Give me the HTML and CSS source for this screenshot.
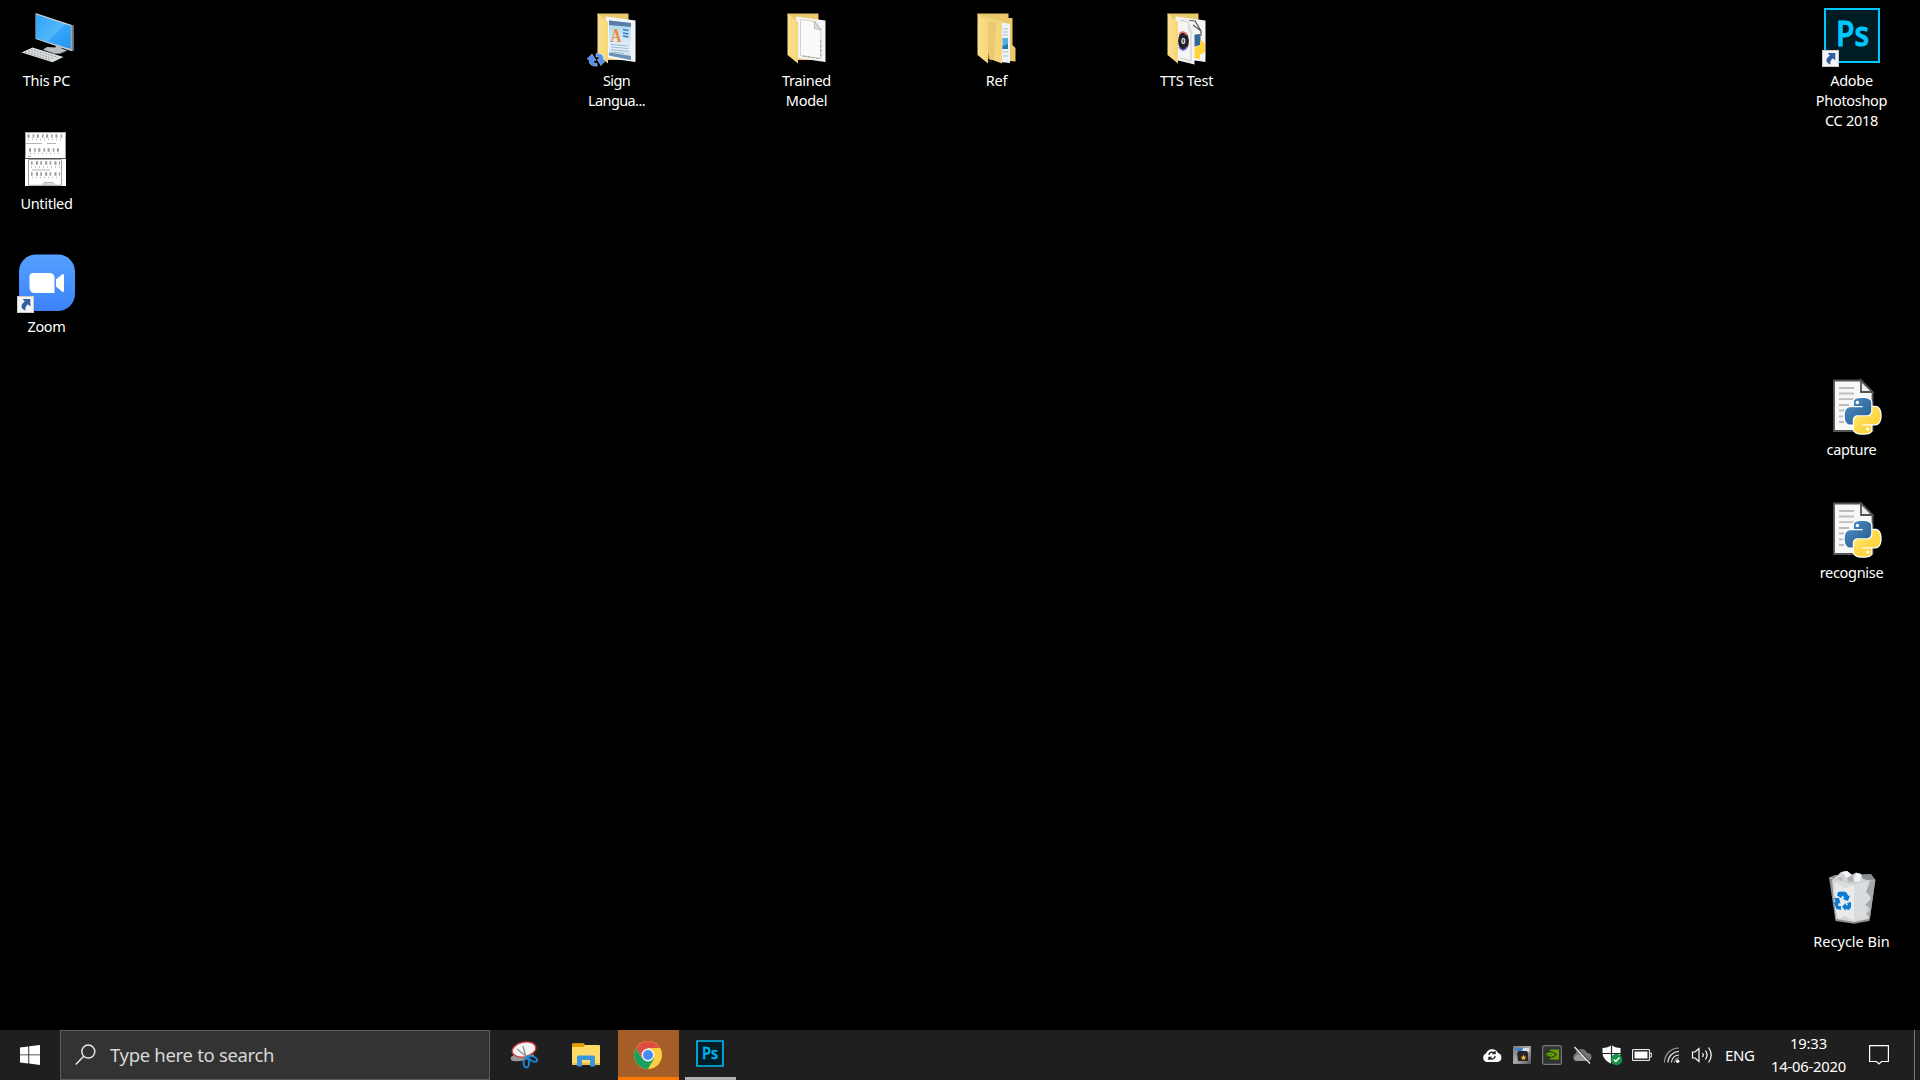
FILE: index.html
```html
<!DOCTYPE html>
<html lang="en">
<head>
<meta charset="utf-8">
<title>Desktop</title>
<link rel="stylesheet" href="styles.css">
</head>
<body>
<svg class="defs" width="0" height="0" aria-hidden="true">
  <defs>
    <linearGradient id="screen" x1="0" y1="0" x2="1" y2="1"><stop offset="0" stop-color="#2ea3f5"/><stop offset=".55" stop-color="#53b8fb"/><stop offset=".56" stop-color="#35a6f8"/><stop offset="1" stop-color="#2196f3"/></linearGradient>
    <linearGradient id="folder" x1="0" y1="0" x2="1" y2="0"><stop offset="0" stop-color="#fbdf8e"/><stop offset="1" stop-color="#f6d778"/></linearGradient>
    <linearGradient id="zoomblue" x1="0" y1="0" x2="0" y2="1"><stop offset="0" stop-color="#55a0ff"/><stop offset="1" stop-color="#3c82f8"/></linearGradient>
    <linearGradient id="pyblue" x1="0" y1="0" x2="1" y2="1"><stop offset="0" stop-color="#4b8fc6"/><stop offset="1" stop-color="#28588a"/></linearGradient>
    <linearGradient id="pyyellow" x1="1" y1="1" x2="0" y2="0"><stop offset="0" stop-color="#ffe873"/><stop offset="1" stop-color="#ffcb28"/></linearGradient>
    <linearGradient id="wordpad" x1="0" y1="0" x2="0" y2="1"><stop offset="0" stop-color="#a9d4ee"/><stop offset=".7" stop-color="#e4f1f9"/><stop offset="1" stop-color="#c8dced"/></linearGradient>
    <linearGradient id="steel" x1="0" y1="0" x2="1" y2="1"><stop offset="0" stop-color="#777"/><stop offset=".5" stop-color="#aaa"/><stop offset="1" stop-color="#555"/></linearGradient>
    <symbol id="shortcut" viewBox="0 0 17 17">
      <path d="M0 0H17V17H0Z" fill="#f5f5f5"/><path d="M.5 .5H16.500V16.500H.5Z" fill="none" stroke="#c9c9c9"/>
      <path d="M5.600 3H13.300V10.500L10.900 8.300C8.800 9.800 8 11.800 8.500 14.500C3.200 12.600 3.200 8.300 7.800 5.400Z" fill="#2f5fa0"/>
    </symbol>
    <path id="snake" d="M14.25.18l.9.2.73.26.59.3.45.32.34.34.25.34.16.33.1.3.04.26.02.2-.01.13V8.5l-.05.63-.13.55-.21.46-.26.38-.3.31-.33.25-.35.19-.35.14-.33.1-.3.07-.26.04-.21.02H8.77l-.69.05-.59.14-.5.22-.41.27-.33.32-.27.35-.2.36-.15.37-.1.35-.07.32-.04.27-.02.21v3.06H3.17l-.21-.03-.28-.07-.32-.12-.35-.18-.36-.26-.36-.36-.35-.46-.32-.59-.28-.73-.21-.88-.14-1.05-.05-1.23.06-1.22.16-1.04.24-.87.32-.71.36-.57.4-.44.42-.33.42-.24.4-.16.36-.1.32-.05.24-.01h.16l.06.01h8.16v-.83H6.18l-.01-2.75-.02-.37.05-.34.11-.31.17-.28.25-.26.31-.23.38-.2.44-.18.51-.15.58-.12.64-.1.71-.06.77-.04.84-.02 1.27.05z"/>
    <symbol id="pyfile" viewBox="0 0 92 68">
      <path d="M29 11.500H56L67.500 23V62H29Z" fill="#f7f7f7" stroke="#545454" stroke-width="1.800"/>
      <path d="M34 19H49M34 24.500H49M34 30.200H49M34 36H44M34 41.500H40M34 47.300H38M34 53H39" stroke="#bdbdbd" stroke-width="1.800"/>
      <path d="M56 11.500V23H67.500Z" fill="#ededed" stroke="#545454" stroke-width="1.800"/>
      <g transform="translate(39.800 29) scale(1.480)">
        <g fill="#fff" stroke="#fff" stroke-width="1.700"><use href="#snake"/><use href="#snake" transform="rotate(180 12 12)"/></g>
        <use href="#snake" fill="url(#pyblue)"/><use href="#snake" fill="url(#pyyellow)" transform="rotate(180 12 12)"/>
        <circle cx="8.500" cy="3" r="1.150" fill="#fff"/><circle cx="15.500" cy="21" r="1.150" fill="#fff"/>
      </g>
    </symbol>
  </defs>
</svg>

<main class="desktop">
  <div class="item col-0 row-0">
    <svg class="pic" viewBox="0 0 92 68">
      <path d="M35.500 13L73.500 25.500V50.500L71 51L35.500 39Z" fill="#c8cdd0"/>
      <path d="M71.500 25L73.500 25.500V50.500L71.500 50Z" fill="#72787c"/>
      <path d="M36 14.500L70.800 26V49L36 38.500Z" fill="url(#screen)"/>
      <path d="M56 44.500L62 46L61.500 48.500L67 50.500L60 53.500H54L43 49.500L47 47L55.500 47.500Z" fill="#b9c0c4"/>
      <path d="M43 49.500L54 53.500H60L67 50.500" fill="none" stroke="#81888c" stroke-width=".7"/>
      <path d="M32.500 47.500L63.500 57L52.500 62.200L21.500 52.500Z" fill="#dce0e2"/>
      <path d="M31 49.500L58 57.500M28 51L54 59M25 52.200L50 60" stroke="#92999d" stroke-width=".9" stroke-dasharray="2 1"/>
    </svg>
    <span class="label">This PC</span>
  </div>

  <div class="item col-0 row-1">
    <svg class="pic" viewBox="0 0 92 68">
      <path d="M25 9H66V63H25Z" fill="#fff"/>
      <path d="M25.500 9.500H65.500V35.500H25.500ZM28.500 36.500H61.500V62.300H28.500Z" fill="none" stroke="#999" stroke-width=".9"/>
      <path d="M25 35.500H66" stroke="#555" stroke-width="1.200"/>
      <path d="M27.500 13H64M29 27H61" stroke="#999" stroke-width="3.500" stroke-dasharray="2 3.200 1.500 2.600"/>
      <path d="M31 40H60M31 51H60" stroke="#999" stroke-width="3.500" stroke-dasharray="1.600 3.300 2 2.400"/>
      <path d="M28 16.500H64M30 30.500H60M31 44H60M32 54.500H59" stroke="#bbb" stroke-width="1.500" stroke-dasharray="1 3"/>
      <path d="M26 20.500H42M47 20.500H56M32 47H50M44 59.500H53M42 61H55M28 33.500H31" stroke="#aaa" stroke-width=".9"/>
    </svg>
    <span class="label">Untitled</span>
  </div>

  <div class="item col-0 row-2">
    <svg class="pic" viewBox="0 0 92 68">
      <rect x="19" y="8.500" width="56" height="56.500" rx="17" fill="url(#zoomblue)"/>
      <path d="M33 27H49Q54.500 27 54.500 32V46.500Q54.500 47 54 47H35Q29.500 47 29.500 41V30.500Q29.500 27 33 27ZM56 33.500L62 28.500Q64 27 64 29.500V44.500Q64 47 62 45.500L56 40.500Z" fill="#fff"/>
      <use href="#shortcut" x="17" y="50" width="17" height="17"/>
    </svg>
    <span class="label">Zoom</span>
  </div>

  <div class="item col-3 row-0">
    <svg class="pic" viewBox="0 0 92 68">
      <path d="M27.500 13.500H58.500V60H38Z" fill="#e9c969"/>
      <path d="M35.500 16.500L65.500 20.500V62L37 58Z" fill="#f3f6f8"/>
      <path d="M39 20.500L61 23V60L39 55.500Z" fill="url(#wordpad)"/>
      <path d="M39 20.500L61 23V27L39 25Z" fill="#577da6"/><path d="M39 52.500L61 56V60L39 55.500Z" fill="#6d92b7"/>
      <text x="40.500" y="42" class="letter-a" textLength="11" lengthAdjust="spacingAndGlyphs">A</text>
      <path d="M53 29.500L58.500 30.500M53 33L58.500 34M53 36L58.500 37" stroke="#397bb7" stroke-width="1.500"/>
      <path d="M41 44.500L58.500 46M41 47L58.500 48.500M41 49.500L58.500 51.500M41 52L54 53.500" stroke="#8ea9c2" stroke-width=".8"/>
      <path d="M27.500 13.500L38 22V63.500L27.500 55Z" fill="url(#folder)"/>
      <g fill="#4d91f4" stroke="#dce9ff" stroke-width=".5"><path d="M27 66C19.500 66.500 18.500 62 19.700 59.500L17.200 59L22 54L26 60.500L23.600 60C23.300 62.500 24.500 63.800 27 63.500Z"/><path d="M26 53.800C31.500 52.500 34 56 33.300 59.500L35.800 60L31 65.500L27.200 59.200L29.500 59.300C29.800 57.500 28.500 56.500 26 57Z"/></g>
    </svg>
    <span class="label tight">Sign<br>Langua...</span>
  </div>

  <div class="item col-4 row-0">
    <svg class="pic" viewBox="0 0 92 68">
      <path d="M27.500 13.500H58.500V60H38Z" fill="#e9c969"/>
      <path d="M36 16.500L65.500 20.500V62L37 58Z" fill="#f2f4f5"/>
      <path d="M40.500 19.500L55 21.500L60.800 29V58.700L40.500 55.500Z" fill="#fafafa" stroke="#c9c4b4" stroke-width=".7"/>
      <path d="M60.800 40V57M43 56L60.500 58.700" stroke="#8b887d" stroke-width=".8" stroke-dasharray="3 1.500"/>
      <path d="M54.500 21.500V28.500L60.800 30Z" fill="#dce0e2" stroke="#888" stroke-width=".5"/>
      <path d="M27.500 13.500L38 22V63.500L27.500 55Z" fill="url(#folder)"/>
    </svg>
    <span class="label">Trained<br>Model</span>
  </div>

  <div class="item col-5 row-0">
    <svg class="pic" viewBox="0 0 92 68">
      <path d="M27.500 13.500H58.500V18H62.500V45L65.500 48V61.500L60 61V55L40 60Z" fill="#e9c969"/>
      <path d="M50 22L60 24V63L50 62Z" fill="#edf2f5"/>
      <path d="M53 29H58M53 32H58M53 35H58M53 52H58M53 56H58" stroke="#a9c1d1" stroke-width="1"/>
      <path d="M52.500 38H58V49H52.500Z" fill="#55b1dd"/><path d="M52.500 46L58 44V49H52.500Z" fill="#267aae"/>
      <path d="M38 60L43 62H38Z" fill="#282828"/>
      <path d="M33 16L52 21.500V63.500L40 59Z" fill="#f4d67d"/><path d="M38 22L46 22L44 60L38 59Z" fill="#e3c36a" opacity=".65"/>
      <path d="M27.500 13.500L38 22V63.500L27.500 55Z" fill="url(#folder)"/>
    </svg>
    <span class="label">Ref</span>
  </div>

  <div class="item col-6 row-0">
    <svg class="pic" viewBox="0 0 92 68">
      <path d="M27.500 13.500H58.500V60H38Z" fill="#e9c969"/>
      <path d="M36 16.500L65.500 20.500V62L37 58Z" fill="#f5f5f5"/>
      <path d="M44 20L55 21L61 31V36M53 25L61 31" fill="none" stroke="#555" stroke-width="1.200"/>
      <path d="M53 35L59 34Q60.500 34 60.500 36V45L53 47Z" fill="#32699b"/><path d="M54 48L60 45V41L63 41Q65.500 44 65 51Q64 54 60 54V59L54 58Z" fill="#ffd43b"/>
      <path d="M35.500 16.500L49 20L54.500 30V64.500L36 60Z" fill="#f4f4f4"/><path d="M40 20L48 22L51 31V61L40 58" fill="none" stroke="#bbb5a4" stroke-width=".7"/>
      <path d="M48 22V31L53 33Z" fill="#ddd"/>
      <ellipse cx="43.500" cy="41" rx="5.400" ry="9.200" fill="#21202a"/><path d="M39 35Q42 29 47 35" fill="none" stroke="#ef705a" stroke-width="1.400"/><path d="M39 47Q43 53 47 47" fill="none" stroke="#8365d2" stroke-width="1.400"/>
      <ellipse cx="43.300" cy="41" rx="1.500" ry="2.500" fill="#555" stroke="#ddd" stroke-width="1.200"/>
      <path d="M27.500 13.500L38 22V63.500L27.500 55Z" fill="url(#folder)"/>
    </svg>
    <span class="label">TTS Test</span>
  </div>

  <div class="item col-last row-0">
    <svg class="pic" viewBox="0 0 92 68">
      <path d="M20 9H74V62H20Z" fill="#001d26" stroke="#00c8ff" stroke-width="2"/>
      <text x="31" y="46" class="ps-big" textLength="33" lengthAdjust="spacingAndGlyphs">Ps</text>
      <use href="#shortcut" x="17" y="50" width="17" height="17"/>
    </svg>
    <span class="label">Adobe<br>Photoshop<br>CC 2018</span>
  </div>

  <div class="item col-last row-3">
    <svg class="pic" viewBox="0 0 92 68"><use href="#pyfile"/></svg>
    <span class="label">capture</span>
  </div>

  <div class="item col-last row-4">
    <svg class="pic" viewBox="0 0 92 68"><use href="#pyfile"/></svg>
    <span class="label">recognise</span>
  </div>

  <div class="item col-last row-7">
    <svg class="pic" viewBox="0 0 92 68">
      <path d="M24 16.500L30 14L66 13L70.500 19L64.500 60L49 62.800L30.500 60Z" fill="#8b8e91"/>
      <path d="M27 19L33 14L36 11L42 10L47 14L51 11.500L56 13L58 18L67 20L64 58L49 61L31 58Z" fill="#d2d4d6"/>
      <path d="M37 11L42 10L47 14L42 17ZM51 12L56 13L55 21L49 20Z" fill="#f4f5f6"/>
      <path d="M42 17L47 14L49 20L44 22ZM33 17L38 16L36 20Z" fill="#aeb1b4"/>
      <path d="M28 22L35 20L48 24L62 20L68 21L63 33L66 40L60 50L64 56L49 60L47 50L33 58L29 40Z" fill="#dadcde"/>
      <path d="M65 20L70 20L65 57L61 53L66 48L60 44L67 37L61 31Z" fill="#a5a9ac"/>
      <path d="M30 22L40 27L49 24V60L40 55L34 58L31 49L36 42L30 35Z" fill="#eceeef" opacity=".8"/>
      <path d="M24.500 17L49 21.500L70 19" fill="none" stroke="#c8cacc" stroke-width=".8"/>
      <g fill="#0a7bd5"><path d="M33 31L37 30.500L41 31L43.500 35L45 34.500L43 40L37.500 38L39.500 37L37.500 34.500L36 37L32 34.500Z"/><path d="M29 37L34 37L35.500 42.500L33.700 41.700L33 45H36V49L31.500 48L29 42L30.500 40Z"/><path d="M46 41L46 46L44 49L40.500 48V50L37 45.500L41 42V44.500L43 44L42 42Z"/></g>
    </svg>
    <span class="label wide">Recycle Bin</span>
  </div>
</main>

<footer class="taskbar">
  <div class="start">
    <svg width="20" height="20" viewBox="0 0 20 20" fill="#fff"><path d="M0 2.600L8.300 1.500V9.400H0ZM9.200 1.300L20 0V9.400H9.200ZM0 10.300H8.300V18.500L0 17.400ZM9.200 10.300H20V20L9.200 18.600Z"/></svg>
  </div>
  <div class="search">
    <svg width="22" height="22" viewBox="0 0 22 22" fill="none" stroke="#e8e8e8" stroke-width="1.500"><circle cx="13.300" cy="7.600" r="6.500"/><path d="M8.700 12.300L.8 20.500"/></svg>
    <span class="hint">Type here to search</span>
  </div>
  <nav class="apps">
    <div class="app">
      <svg width="30" height="30" viewBox="0 0 30 30">
        <path d="M2 17L6 14L22 15L19 19Q12 22 4 21Q1 20 2 17Z" fill="#999"/>
        <ellipse cx="15" cy="9.500" rx="12" ry="7.200" transform="rotate(-13 15 9.500)" fill="#f4f4f4" stroke="#d33d3d" stroke-width="1.300"/>
        <path d="M8 9L18 17M14 6L17 17M17 17L25 15" stroke="#999" stroke-width="1.500"/>
        <g fill="none" stroke="#1988d6" stroke-width="1.800"><path d="M18 17C13 20 14 27 17.500 27.500C21 27 20.500 20 18 17Z"/><path d="M18.500 16.500C23 15 29 18 28 21C26 23.500 20 20 18.500 16.500Z"/></g>
      </svg>
    </div>
    <div class="app">
      <svg width="28" height="24" viewBox="0 0 28 24">
        <path d="M0 1.500Q0 .5 1 .5H11.500L13 2H27Q28 2 28 3V22H0Z" fill="#ffda69"/><path d="M0 1.500Q0 .5 1 .5H11.500L13 2L11.500 4H0Z" fill="#e2a100"/>
        <path d="M0 20H28V22H0Z" fill="#efbd49"/><path d="M5 14Q5 12.500 6.500 12.500H21.500Q23 12.500 23 14V23.500H18V17H10V23.500H5Z" fill="#3b97dd"/>
      </svg>
    </div>
    <div class="app active">
      <svg width="28" height="28" viewBox="0 0 28 28">
        <circle cx="14" cy="14" r="14" fill="#ffcd40"/>
        <path d="M14 14L8.100 17.400L1.900 7A14 14 0 0 1 26.100 7H14Z" fill="#dd4f43"/>
        <path d="M1.900 7A14 14 0 0 0 14 28L20.100 17.500L14 14L8 17.500Z" fill="#19a15f"/>
        <circle cx="14" cy="14" r="6.500" fill="#f4f4f4"/><circle cx="14" cy="14" r="5" fill="#4a8af4"/>
      </svg>
    </div>
    <div class="app running">
      <svg width="28" height="27" viewBox="0 0 28 27"><path d="M1 1H27V26H1Z" fill="#001d26" stroke="#00b8f0" stroke-width="1.700"/><text x="6" y="18.500" class="ps-small" textLength="16" lengthAdjust="spacingAndGlyphs">Ps</text></svg>
    </div>
  </nav>
  <div class="tray">
    <div class="cell"><svg width="20" height="20" viewBox="0 0 20 20"><path d="M4.500 17A4.500 4.500 0 0 1 4 8.500A6.500 6.500 0 0 1 16 8A4.600 4.600 0 0 1 15.500 17Z" fill="#fff"/><path d="M6.800 9.800A3.300 3.300 0 0 1 12.300 8M13.200 11.200A3.300 3.300 0 0 1 7.700 13.200M13 6V8.600H10.400M7 15V12.500H9.600" fill="none" stroke="#222" stroke-width="1.400"/></svg></div>
    <div class="cell"><svg width="18" height="18" viewBox="0 0 18 18"><rect width="18" height="18" rx="1" fill="url(#steel)"/><path d="M2 2H15L11 6H5Z" fill="#3b80d4"/><path d="M10 2H16V6H9Z" fill="#d8dfe5"/><path d="M4 7L6 5H14L15 7V15H5Z" fill="#252525"/><path d="M10.500 8.500L11.300 10.700H13.500L11.800 12L12.400 14.200L10.500 13L8.600 14.200L9.200 12L7.500 10.700H9.700Z" fill="#ffc129"/></svg></div>
    <div class="cell"><svg width="20" height="20" viewBox="0 0 20 20"><rect x=".6" y=".6" width="18.800" height="18.800" rx="2" fill="#303234" stroke="#777" stroke-width="1.200"/><path d="M8 4.500H17V14.500H8Z" fill="#669f05"/><path d="M2.500 9.500Q8 3.500 14.500 9.500Q9 15.500 2.500 9.500Z" fill="#49730b" stroke="#243800"/><path d="M5 9.500Q8.500 6.500 12 9.500Q9 12.500 7 10" fill="none" stroke="#7dbb1a" stroke-width=".9"/></svg></div>
    <div class="cell"><svg width="22" height="20" viewBox="0 0 22 20"><path d="M5 16A4 4 0 0 1 4.500 8.500A6 6 0 0 1 16 8A4 4 0 0 1 17 16Z" fill="#747474"/><path d="M3 14Q6 7 12 11L17 16H5Z" fill="#969696"/><path d="M4 1.500L19.500 18" stroke="#222" stroke-width="1.500"/><path d="M3.500 2L19 18.500" stroke="#e8e8e8" stroke-width="1.400"/></svg></div>
    <div class="cell"><svg width="22" height="22" viewBox="0 0 22 22"><path d="M10.500 1Q14 4 19.500 4V10Q18.500 16 10.500 20Q2.500 16 1.500 10V4Q7 4 10.500 1Z" fill="#fff"/><path d="M10.500 0V21M1 9.500H20" stroke="#222" stroke-width="1.200"/><circle cx="15.500" cy="15.500" r="5.700" fill="#149347"/><path d="M12.700 15.500L14.800 17.500L18.500 13.500" fill="none" stroke="#fff" stroke-width="1.500"/></svg></div>
    <div class="cell"><svg width="20" height="12" viewBox="0 0 20 12"><path d="M.6 .6H17.400V11.400H.6ZM17.500 4H19.300V8H17.500" fill="none" stroke="#fff"/><path d="M2.500 2.500H15.500V9.500H2.500Z" fill="#fff"/></svg></div>
    <div class="cell"><svg width="18" height="18" viewBox="0 0 18 18" fill="none" stroke-width="1.200"><path d="M1.500 16.500A14.500 14.500 0 0 1 16 2" stroke="#9a9a9a"/><path d="M5 16.500A11 11 0 0 1 16 5.500M8.500 16.500A7.500 7.500 0 0 1 16 9" stroke="#e6e6e6"/><path d="M11.500 16.500A4.500 4.500 0 0 1 16 12" stroke="#999"/><circle cx="14.700" cy="15.200" r="1.700" fill="#fff"/></svg></div>
    <div class="cell"><svg width="22" height="18" viewBox="0 0 22 18" fill="none" stroke="#fff" stroke-width="1.200"><path d="M1.500 6H4L8 2.500V15.500L4 12H1.500Z"/><path d="M11.500 7Q13 9 11.500 11M14.500 4.500Q17.500 9 14.500 13.500M17.500 1.500Q23 9 17.500 16.500"/></svg></div>
    <span class="lang">ENG</span>
    <div class="clock"><span class="time">19:33</span><span class="date">14-06-2020</span></div>
    <div class="notice"><svg width="20" height="20" viewBox="0 0 20 20" fill="none" stroke="#fff" stroke-width="1.200"><path d="M.6 .6H19.400V16.500H12.500L10 19L7.500 16.500H.6Z"/></svg></div>
  </div>
  <div class="peek"></div>
</footer>
</body>
</html>
```
FILE: styles.css
```css
* { box-sizing: border-box; }
html, body { margin: 0; height: 100%; }
body {
  display: flex;
  flex-direction: column;
  width: 1920px;
  height: 1080px;
  overflow: hidden;
  background: #000;
  color: #fff;
  font-family: "Noto Sans", "Open Sans", sans-serif;
}
svg { display: block; flex: none; }
.defs { position: absolute; }

/* Desktop icons sit on a free canvas with a 190 x 123 pitch */
.desktop { position: relative; flex: 1; }
.item { position: absolute; width: 92px; }
.col-0 { left: 0; }
.col-3 { left: 570px; }
.col-4 { left: 760px; }
.col-5 { left: 950px; }
.col-6 { left: 1140px; }
.col-last { left: 1805px; }
.row-0 { top: 0; }
.row-1 { top: 123px; }
.row-2 { top: 246px; }
.row-3 { top: 369px; }
.row-4 { top: 492px; }
.row-7 { top: 861px; }
.pic { width: 92px; height: 68px; }
.label {
  display: block;
  margin-top: 2px;
  padding-left: 1px;
  font-size: 14.500px;
  line-height: 20px;
  letter-spacing: -0.3px;
  text-align: center;
  white-space: nowrap;
}
.label.tight { letter-spacing: -0.6px; }
.label.wide { letter-spacing: 0; }
.letter-a { font: bold 19px "Liberation Serif", serif; fill: #f08a35; }
.ps-big { font: 600 34px "Open Sans", sans-serif; fill: #00c8ff; stroke: #00c8ff; stroke-width: 0.9px; }
.ps-small { font: 600 16px "Open Sans", sans-serif; fill: #00b8f0; stroke: #00b8f0; stroke-width: 0.4px; }

.taskbar { display: flex; height: 50px; background: #1f1f1f; }
.start { display: flex; width: 60px; align-items: center; justify-content: center; }
.search {
  display: flex;
  width: 430px;
  align-items: center;
  padding-left: 14px;
  background: #333;
  border: 1px solid #5d5d5d;
}
.hint { margin: 0 0 2px 13px; font-size: 18.500px; letter-spacing: -0.32px; color: #d8d8d8; }
.apps { display: flex; gap: 1px; margin-left: 4px; }
.app { display: flex; width: 61px; align-items: center; justify-content: center; padding-right: 2px; }
.active { background: #a65e28; border-bottom: 3px solid #ff7700; padding-top: 3px; }
.running {
  padding-bottom: 3px;
  background: linear-gradient(#b0adac, #b0adac) center bottom / 51px 3px no-repeat;
}
.tray { display: flex; align-items: center; margin-left: auto; }
.cell { display: flex; width: 30px; justify-content: center; }
.lang { width: 49px; padding-left: 8px; font-size: 15px; letter-spacing: -0.4px; }
.clock {
  display: flex;
  flex-direction: column;
  width: 85px;
  align-items: center;
  font-size: 14.800px;
  line-height: 23px;
  letter-spacing: -0.2px;
}
.notice { display: flex; width: 55px; padding-left: 18px; }
.peek { width: 6px; margin-left: 8px; border-left: 1px solid #777; }
```
